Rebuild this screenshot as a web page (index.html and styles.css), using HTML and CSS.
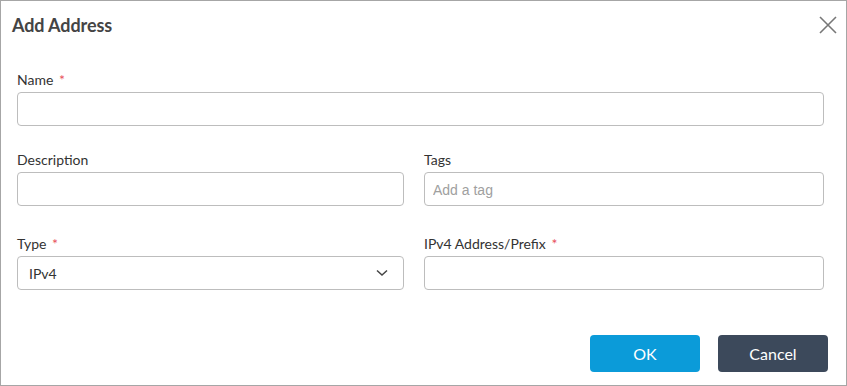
FILE: index.html
```html
<!DOCTYPE html>
<html lang="en">
<head>
    <meta charset="UTF-8">
    <meta name="viewport" content="width=device-width, initial-scale=1.0">
    <title>Add Address</title>
    <link rel="stylesheet" href="styles.css">
</head>
<body>
    <div class="modal">
        <div class="modal-header">
            <h3 class="modal-title">Add Address</h3>
            <button class="close-btn" aria-label="Close">
                <svg width="18" height="18" viewBox="0 0 18 18">
                    <path d="M1 1 L17 17 M17 1 L1 17" stroke="#777" stroke-width="1.6" fill="none"/>
                </svg>
            </button>
        </div>
        <div class="modal-body">
            <div class="field full">
                <label>Name <span class="req">*</span></label>
                <input type="text">
            </div>
            <div class="field-grid">
                <div class="field">
                    <label>Description</label>
                    <input type="text">
                </div>
                <div class="field">
                    <label>Tags</label>
                    <input type="text" class="tag-input" placeholder="Add a tag">
                </div>
                <div class="field">
                    <label>Type <span class="req">*</span></label>
                    <div class="select">
                        <span>IPv4</span>
                        <svg width="12" height="8" viewBox="0 0 12 8">
                            <path d="M1 1.5 L6 6 L11 1.5" stroke="#444" stroke-width="1.5" fill="none"/>
                        </svg>
                    </div>
                </div>
                <div class="field">
                    <label>IPv4 Address/Prefix <span class="req">*</span></label>
                    <input type="text">
                </div>
            </div>
        </div>
        <div class="modal-footer">
            <button class="btn btn-primary">OK</button>
            <button class="btn btn-secondary">Cancel</button>
        </div>
    </div>
</body>
</html>
```

FILE: styles.css
```css
* {
    box-sizing: border-box;
}
body {
    margin: 0;
    background-color: #fff;
    font-family: Lato, "Open Sans", sans-serif;
    color: #333;
}
.modal {
    width: 847px;
    height: 386px;
    border: 1px solid #a6a6a6;
    background-color: white;
}
.modal-header {
    display: flex;
    justify-content: space-between;
    align-items: flex-start;
    padding: 13px 9px 0 11px;
    height: 52px;
}
.modal-title {
    margin: 0;
    font-size: 18px;
    font-weight: bold;
    color: #444;
    letter-spacing: -0.1px;
}
.close-btn {
    background: none;
    border: none;
    padding: 0;
    margin-top: 2px;
    cursor: pointer;
    line-height: 0;
}
.modal-body {
    padding: 18px 22px 0 16px;
}
.field {
    display: flex;
    flex-direction: column;
}
.field label {
    font-size: 14px;
    color: #333;
    height: 19px;
    margin-bottom: 2px;
}
.req {
    color: #e8505b;
    margin-left: 2px;
}
.field input,
.select {
    height: 34px;
    border: 1px solid #bdbdbd;
    border-radius: 4px;
    padding: 0 11px;
    font-family: Lato, sans-serif;
    font-size: 14px;
    color: #333;
    background: white;
}
.tag-input {
    padding-left: 8px !important;
}
.tag-input::placeholder {
    color: #a0a0a0;
    font-family: "Liberation Sans", Arial, sans-serif;
    font-size: 14px;
}
.field-grid {
    display: grid;
    grid-template-columns: 387px 1fr;
    column-gap: 20px;
    row-gap: 29px;
    margin-top: 25px;
}
.select {
    display: flex;
    align-items: center;
    justify-content: space-between;
    padding-right: 15px;
}
.modal-footer {
    display: flex;
    justify-content: flex-end;
    gap: 18px;
    padding: 45px 18px 0 0;
}
.btn {
    width: 110px;
    height: 37px;
    border: none;
    border-radius: 4px;
    color: white;
    font-family: Lato, sans-serif;
    font-size: 16px;
    cursor: pointer;
}
.btn-primary {
    background-color: #0b9bd9;
}
.btn-secondary {
    background-color: #3c495b;
}
```
